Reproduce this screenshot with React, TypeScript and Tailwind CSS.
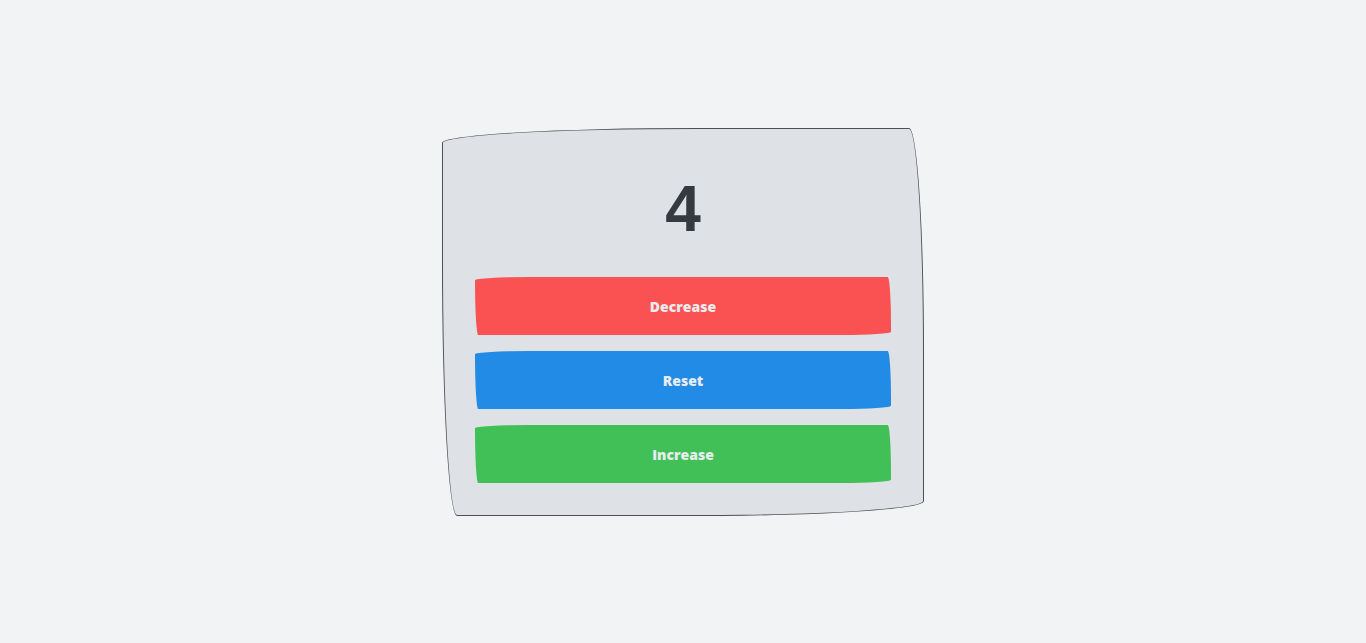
import React, { useState } from 'react';

// hand-drawn look: the classic sketchy radius
const SKETCH = 'rounded-[255px_15px_225px_15px/15px_225px_15px_255px]';

export default function App() {
  const [count, setCount] = useState(4);

  return (
    <div className="min-h-screen w-full bg-[#f1f3f5] flex items-start justify-center pt-[128px] font-['Open_Sans',sans-serif]">
      <div className={`w-[482px] bg-[#dee2e6] border border-[#495057] px-8 pt-8 pb-8 ${SKETCH}`}>
        <div className="text-center text-[64px] font-bold text-[#343a40] font-['Liberation_Sans',Arial,sans-serif] mb-5">
          {count}
        </div>
        <div className="flex flex-col gap-4">
          <button
            onClick={() => setCount((c) => c - 1)}
            className={`h-[58px] w-full bg-[#fa5252] text-[#e9ecef] text-[14px] font-extrabold ${SKETCH}`}
          >
            Decrease
          </button>
          <button
            onClick={() => setCount(0)}
            className={`h-[58px] w-full bg-[#228be6] text-[#e9ecef] text-[14px] font-extrabold ${SKETCH}`}
          >
            Reset
          </button>
          <button
            onClick={() => setCount((c) => c + 1)}
            className={`h-[58px] w-full bg-[#40c057] text-[#e9ecef] text-[14px] font-extrabold ${SKETCH}`}
          >
            Increase
          </button>
        </div>
      </div>
    </div>
  );
}
